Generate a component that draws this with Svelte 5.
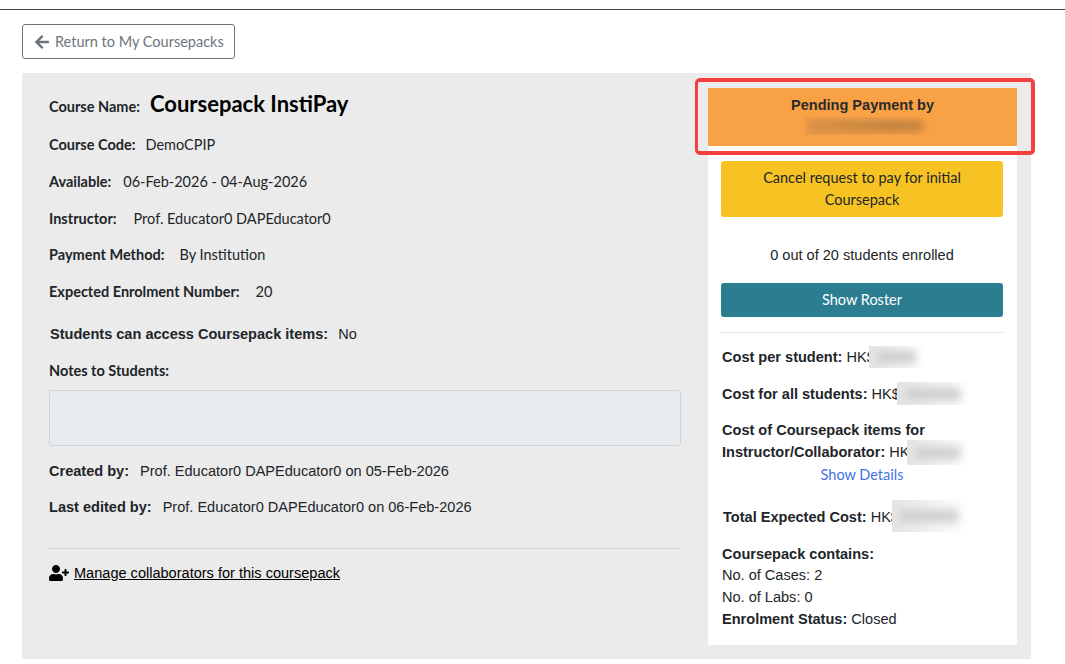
<script>
  const leftRows = [
    { label: 'Course Code:', value: 'DemoCPIP', gap: 10, h: 37 },
    { label: 'Available:', value: '06-Feb-2026 - 04-Aug-2026', gap: 12, h: 37 },
    { label: 'Instructor:', value: 'Prof. Educator0 DAPEducator0', gap: 17, h: 36 },
    { label: 'Payment Method:', value: 'By Institution', gap: 15, h: 37 },
    { label: 'Expected Enrolment Number:', value: '20', gap: 16, h: 37 }
  ];
</script>

<div class="page">
  <div class="topline"></div>
  <button class="back">
    <svg class="arrow" viewBox="0 0 448 512" aria-hidden="true"><path d="M257.5 445.1l-22.2 22.2c-9.4 9.4-24.6 9.4-33.9 0L7 273c-9.4-9.4-9.4-24.6 0-33.9L201.4 44.7c9.4-9.4 24.6-9.4 33.9 0l22.2 22.2c9.5 9.5 9.3 25-.4 34.3L136.6 216H424c13.3 0 24 10.7 24 24v32c0 13.3-10.700 24-24 24H136.6l120.5 114.8c9.8 9.3 10 24.8.4 34.3z"/></svg>
    <span>Return to My Coursepacks</span>
  </button>

  <div class="panel">
    <div class="left">
      <div class="title-row">
        <span class="lab">Course Name:</span>
        <span class="title">Coursepack InstiPay</span>
      </div>
      {#each leftRows as r}
        <div class="row" style="height:{r.h}px">
          <span class="lab">{r.label}</span>
          <span class="val" style="margin-left:{r.gap}px">{r.value}</span>
        </div>
      {/each}
      <div class="row arial access">
        <b>Students can access Coursepack items:</b><span class="v-a narrow">No</span>
      </div>
      <div class="row notes-l"><span class="lab">Notes to Students:</span></div>
      <div class="notes"></div>
      <div class="row arial created"><b>Created by:</b><span class="v-a">Prof. Educator0 DAPEducator0 on 05-Feb-2026</span></div>
      <div class="row arial edited"><b>Last edited by:</b><span class="v-a">Prof. Educator0 DAPEducator0 on 06-Feb-2026</span></div>
      <hr class="rule" />
      <div class="collab">
        <svg class="userplus" viewBox="0 0 640 512" aria-hidden="true"><path d="M624 208h-64v-64c0-8.800-7.200-16-16-16h-32c-8.800 0-16 7.200-16 16v64h-64c-8.800 0-16 7.200-16 16v32c0 8.800 7.200 16 16 16h64v64c0 8.800 7.200 16 16 16h32c8.800 0 16-7.200 16-16v-64h64c8.800 0 16-7.200 16-16v-32c0-8.800-7.200-16-16-16zm-400 48c70.700 0 128-57.300 128-128S294.700 0 224 0 96 57.300 96 128s57.300 128 128 128zm89.600 32h-16.700c-22.200 10.200-46.900 16-72.900 16s-50.600-5.800-72.900-16h-16.700C60.200 288 0 348.200 0 422.400V464c0 26.500 21.500 48 48 48h352c26.500 0 48-21.500 48-48v-41.600c0-74.200-60.200-134.400-134.400-134.400z"/></svg>
        <a href="#collab">Manage collaborators for this coursepack</a>
      </div>
    </div>

    <aside class="card">
      <div class="pending">
        <div class="pending-t">Pending Payment by</div>
        <div class="patch orange-patch"></div>
      </div>
      <div class="card-body">
        <button class="cancel">Cancel request to pay for initial Coursepack</button>
        <div class="enrolled">0 out of 20 students enrolled</div>
        <button class="roster">Show Roster</button>
        <hr class="card-rule" />
        <div class="cost c1"><b>Cost per student:</b> HK$<span class="patch s1"></span></div>
        <div class="cost c2"><b>Cost for all students:</b> HK$<span class="patch s2"></span></div>
        <div class="cost c3"><b>Cost of Coursepack items for<br />Instructor/Collaborator:</b> HK$<span class="patch s3"></span></div>
        <a class="details" href="#details">Show Details</a>
        <div class="cost c4"><b>Total Expected Cost:</b> HK$<span class="patch s4"></span></div>
        <div class="cost c5"><b>Coursepack contains:</b></div>
        <div class="cost c6 first">No. of Cases: 2</div>
        <div class="cost c6">No. of Labs: 0</div>
        <div class="cost c6"><b>Enrolment Status:</b> Closed</div>
      </div>
    </aside>
    <div class="highlight"></div>
  </div>
</div>

<style>
  :global(body) { margin: 0; background: #fff; }
  .page { height: 664px; overflow: hidden; font-family: Lato, sans-serif; color: #212529; font-size: 14.5px; }
  .topline { height: 9px; border-bottom: 1px solid #454545; }
  .back { display: flex; align-items: center; gap: 6px; margin: 14px 0 14px 22px; width: 213px; height: 35px; padding: 0 0 0 12px; border: 1px solid #6c757d; border-radius: 3px; background: #fff; color: #6c757d; font: 14.5px Lato, sans-serif; }
  .arrow { width: 14px; height: 16px; fill: #6c757d; }
  .panel { position: relative; display: flex; gap: 27px; width: 1009px; height: 586px; margin-left: 22px; padding: 15px 14px 0 27px; box-sizing: border-box; background: #ebebeb; }
  .left { width: 632px; flex: none; }
  .title-row { display: flex; align-items: center; height: 36px; }
  .title { margin: 0 0 5px 10px; font-size: 22px; font-weight: 700; color: #000; }
  .lab { font-weight: 700; }
  .row { display: flex; align-items: center; }
  .title-row + .row { margin-top: 2px; }
  .arial { font-family: "Liberation Sans", sans-serif; font-size: 14.55px; }
  .access { height: 37px; margin-top: 5px; padding-left: 1px; }
  .v-a { margin-left: 11px; }
  .v-a.narrow { margin-left: 10px; }
  .notes-l { height: 36px; }
  .notes { height: 56px; margin-top: 2px; box-sizing: border-box; background: #e9ecef; border: 1px solid #ced4da; border-radius: 3px; }
  .created { height: 36px; margin-top: 7px; }
  .edited { height: 36px; }
  .rule { margin: 23px 0 0; border: 0; border-top: 1px solid #d4d4d4; }
  .collab { display: flex; align-items: center; gap: 5px; margin-top: 16px; font-family: "Liberation Sans", sans-serif; font-size: 14.55px; }
  .collab a { color: #000; }
  .userplus { width: 20px; height: 16px; fill: #000; }
  .card { width: 309px; height: 557px; background: #fff; flex: none; }
  .pending { position: relative; height: 58px; padding-top: 8px; box-sizing: border-box; background: #f9a145; text-align: center; font: 700 14.55px "Liberation Sans", sans-serif; color: #2b2b2b; }
  .pending-t { height: 18px; line-height: 18px; }
  .patch { position: absolute; display: block; overflow: hidden; background: linear-gradient(90deg, #e4e4e4, #f4f4f4 60%, #fff); }
  .patch::before { content: ""; position: absolute; left: 8px; right: 10px; top: 50%; height: 12px; margin-top: -6px; background: #cdcdcd; filter: blur(4px); }
  .orange-patch { left: 97px; top: 29px; width: 130px; height: 18px; background: linear-gradient(90deg, #ee9a4a, #f4a048 70%, #f9a145); }
  .orange-patch::before { left: 4px; right: 12px; height: 12px; margin-top: -6px; background: linear-gradient(90deg, #d7924a, #d08c44 25%, #c4843f 70%, #c8873f); filter: blur(3.5px); }
  .card-body { padding: 15px 14px 0 13px; font-family: "Liberation Sans", sans-serif; font-size: 14.55px; }
  .cancel { display: block; width: 282px; height: 56px; border: 0; border-radius: 3px; background: #f7c322; color: #212529; font: 14.5px/22px Lato, sans-serif; padding: 0 20px; }
  .enrolled { height: 22px; line-height: 22px; margin-top: 27px; text-align: center; }
  .roster { display: block; width: 282px; height: 34px; margin-top: 17px; border: 0; padding-bottom: 2px; border-radius: 3px; background: #2d7d90; color: #fff; font: 14.5px Lato, sans-serif; }
  .card-rule { margin: 15px 0 0; border: 0; border-top: 1px solid #e2e2e2; width: 282px; }
  .cost { line-height: 22px; position: relative; margin-left: 1px; white-space: nowrap; }
  .c1 { margin-top: 13px; }
  .c2 { margin-top: 15px; }
  .c3 { margin-top: 14px; }
  .c4 { margin-top: 20px; margin-left: 2px; }
  .c5 { margin-top: 15px; }
  .first { margin-top: -1px; }
  .s1 { left: 147px; top: 0; width: 56px; height: 22px; }
  .s2 { left: 175px; top: -1px; width: 73px; height: 23px; }
  .s3 { left: 185px; top: 21px; width: 63px; height: 25px; }
  .s4 { left: 169px; top: -6px; width: 76px; height: 32px; }
  .details { display: block; width: 282px; margin-top: 1px; text-align: center; color: #3f73e6; text-decoration: none; font: 14.5px/22px Lato, sans-serif; }
  .highlight { position: absolute; left: 673px; top: 5px; width: 340px; height: 77px; box-sizing: border-box; border: 4px solid #f33f3f; border-left-width: 3px; border-radius: 5px; }
</style>
